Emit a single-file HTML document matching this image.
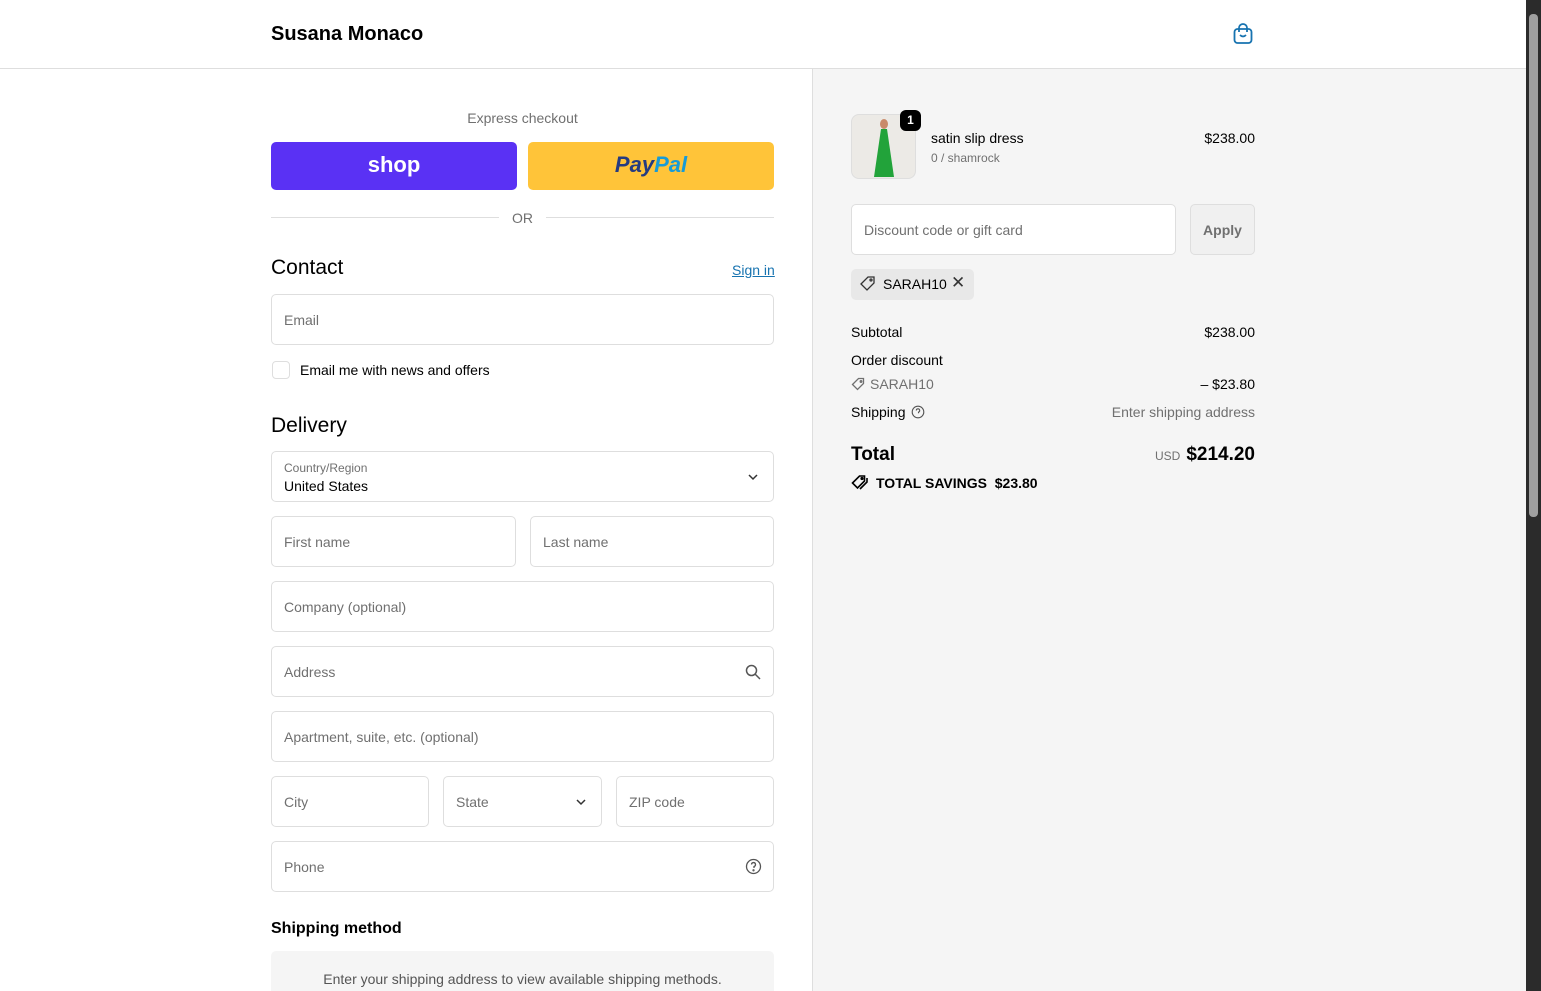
<!DOCTYPE html>
<html style="width:1541px;height:991px;overflow:hidden"><head><meta charset="utf-8"><style>
*{box-sizing:border-box;margin:0;padding:0}
body{width:1541px;height:991px;overflow:hidden;font-family:"Liberation Sans",sans-serif;color:#000;background:#fff;position:relative;font-size:14px}
.a{position:absolute}
.inp{position:absolute;border:1px solid #dedede;border-radius:5px;background:#fff;height:51px}
.ph{position:absolute;left:12px;top:17px;color:#707070;font-size:14px}
.r{position:absolute;font-size:14px}
</style></head><body>
<div class="a" style="left:0;top:0;width:1526px;height:69px;border-bottom:1px solid #dedede;background:#fff"></div>
<div class="a" style="left:271px;top:23px;font-size:20px;font-weight:bold">Susana Monaco</div>
<svg class="a" style="left:1232px;top:23px" width="22" height="22" viewBox="0 0 22 22" fill="none" stroke="#1773b0" stroke-width="1.8"><rect x="2.5" y="6" width="17" height="14" rx="3"/><path d="M7 9V5a4 4 0 0 1 8 0v4"/><path d="M8 12q3 3 6 0"/></svg>
<div class="a" style="left:812px;top:69px;width:714px;height:922px;background:#f5f5f5;border-left:1px solid #dedede"></div>
<div class="a" style="left:1526px;top:0;width:15px;height:991px;background:#2b2b2b"></div>
<div class="a" style="left:1529px;top:14px;width:9px;height:503px;background:#9f9f9f;border-radius:4px"></div>

<div class="a" style="left:271px;top:110px;width:503px;text-align:center;color:#707070;font-size:14px">Express checkout</div>
<div class="a" style="left:271px;top:142px;width:246px;height:48px;background:#5a31f4;border-radius:5px;color:#fff;font-weight:bold;font-size:22px;text-align:center;line-height:46px">shop</div>
<div class="a" style="left:528px;top:142px;width:246px;height:48px;background:#ffc439;border-radius:5px;text-align:center;line-height:46px;font-weight:bold;font-style:italic;font-size:22px"><span style="color:#253b80">Pay</span><span style="color:#179bd7">Pal</span></div>
<div class="a" style="left:271px;top:217px;width:228px;height:1px;background:#dedede"></div>
<div class="a" style="left:546px;top:217px;width:228px;height:1px;background:#dedede"></div>
<div class="a" style="left:500px;top:210px;width:45px;text-align:center;color:#707070">OR</div>

<div class="a" style="left:271px;top:256px;font-size:21px;font-weight:500">Contact</div>
<div class="a" style="left:732px;top:262px;color:#1773b0;text-decoration:underline">Sign in</div>
<div class="inp" style="left:271px;top:294px;width:503px"><span class="ph">Email</span></div>
<div class="a" style="left:272px;top:361px;width:18px;height:18px;border:1px solid #dedede;border-radius:4px"></div>
<div class="a" style="left:300px;top:362px">Email me with news and offers</div>

<div class="a" style="left:271px;top:414px;font-size:21px;font-weight:500">Delivery</div>
<div class="inp" style="left:271px;top:451px;width:503px"><span class="a" style="left:12px;top:9px;font-size:12px;color:#707070">Country/Region</span><span class="a" style="left:12px;top:26px">United States</span><svg class="a" style="left:475px;top:20px" width="12" height="10"><path d="M2 3l4 4 4-4" stroke="#333" stroke-width="1.5" fill="none"/></svg></div>
<div class="inp" style="left:271px;top:516px;width:245px"><span class="ph">First name</span></div>
<div class="inp" style="left:530px;top:516px;width:244px"><span class="ph">Last name</span></div>
<div class="inp" style="left:271px;top:581px;width:503px"><span class="ph">Company (optional)</span></div>
<div class="inp" style="left:271px;top:646px;width:503px"><span class="ph">Address</span><svg class="a" style="left:473px;top:17px" width="16" height="16" fill="none" stroke="#555" stroke-width="1.5"><circle cx="6.5" cy="6.5" r="5"/><path d="M10 10l5 5"/></svg></div>
<div class="inp" style="left:271px;top:711px;width:503px"><span class="ph">Apartment, suite, etc. (optional)</span></div>
<div class="inp" style="left:271px;top:776px;width:158px"><span class="ph">City</span></div>
<div class="inp" style="left:443px;top:776px;width:159px"><span class="ph">State</span><svg class="a" style="left:131px;top:20px" width="12" height="10"><path d="M2 3l4 4 4-4" stroke="#333" stroke-width="1.5" fill="none"/></svg></div>
<div class="inp" style="left:616px;top:776px;width:158px"><span class="ph">ZIP code</span></div>
<div class="inp" style="left:271px;top:841px;width:503px"><span class="ph">Phone</span><svg class="a" style="left:473px;top:16px" width="17" height="17" fill="none" stroke="#555" stroke-width="1.3"><circle cx="8.5" cy="8.5" r="7"/><path d="M6.5 6.5a2 2 0 1 1 2.5 2v1.5"/><circle cx="8.5" cy="12.3" r=".5"/></svg></div>
<div class="a" style="left:271px;top:920px;font-size:16px;font-weight:bold">Shipping method</div>
<div class="a" style="left:271px;top:951px;width:503px;height:40px;background:#f5f5f5;border-radius:5px 5px 0 0;text-align:center;padding-top:20px;color:#555">Enter your shipping address to view available shipping methods.</div>

<div class="a" style="left:851px;top:114px;width:65px;height:65px;border:1px solid #dedede;border-radius:8px;background:#eceae6;overflow:hidden"><div class="a" style="left:22px;top:14px;width:20px;height:48px;background:#22a33a;clip-path:polygon(35% 0,65% 0,100% 100%,0 100%)"></div><div class="a" style="left:28px;top:4px;width:8px;height:10px;background:#c98a6a;border-radius:50%"></div></div>
<div class="a" style="left:900px;top:110px;width:21px;height:21px;background:#000;border-radius:6px;color:#fff;font-size:12px;font-weight:bold;text-align:center;line-height:21px">1</div>
<div class="a" style="left:931px;top:130px">satin slip dress</div>
<div class="a" style="left:931px;top:151px;font-size:12px;color:#707070">0 / shamrock</div>
<div class="r" style="right:286px;top:130px">$238.00</div>
<div class="inp" style="left:851px;top:204px;width:325px;height:51px"><span class="ph">Discount code or gift card</span></div>
<div class="a" style="left:1190px;top:204px;width:65px;height:51px;border:1px solid #dedede;border-radius:5px;background:#f0f0f0;color:#707070;font-weight:bold;text-align:center;line-height:50px">Apply</div>
<div class="a" style="left:851px;top:269px;width:123px;height:31px;background:#e8e8e8;border-radius:5px"></div>
<svg class="a" style="left:859px;top:275px" width="18" height="18" fill="none" stroke="#333" stroke-width="1.3"><path d="M2 9l7-7h6v6l-7 7z"/><circle cx="12" cy="5" r="1"/></svg>
<div class="a" style="left:883px;top:276px">SARAH10</div>
<div class="a" style="left:951px;top:273px;font-size:17px;color:#333">✕</div>
<div class="a" style="left:851px;top:324px">Subtotal</div>
<div class="r" style="right:286px;top:324px">$238.00</div>
<div class="a" style="left:851px;top:352px">Order discount</div>
<svg class="a" style="left:851px;top:377px" width="15" height="15" fill="none" stroke="#707070" stroke-width="1.3"><path d="M1.5 7.5l6-6h5v5l-6 6z"/><circle cx="10" cy="4.5" r=".8"/></svg>
<div class="a" style="left:870px;top:376px;color:#707070">SARAH10</div>
<div class="r" style="right:286px;top:376px">– $23.80</div>
<div class="a" style="left:851px;top:404px">Shipping</div>
<svg class="a" style="left:911px;top:405px" width="14" height="14" fill="none" stroke="#555" stroke-width="1.1"><circle cx="7" cy="7" r="5.8"/><path d="M5.3 5.5a1.7 1.7 0 1 1 2.2 1.6v1.2"/></svg>
<div class="r" style="right:286px;top:404px;color:#707070">Enter shipping address</div>
<div class="a" style="left:851px;top:444px;font-size:19px;font-weight:bold">Total</div>
<div class="r" style="right:286px;top:444px;font-size:19px;font-weight:bold"><span style="font-size:12px;font-weight:normal;color:#707070;margin-right:6px">USD</span>$214.20</div>
<svg class="a" style="left:851px;top:474px" width="18" height="17" fill="none" stroke="#000" stroke-width="1.6"><path d="M1.5 9l7-7h5v5l-7 7z"/><path d="M16 4v4l-7 7"/><circle cx="11" cy="4.5" r=".8"/></svg>
<div class="a" style="left:876px;top:475px;font-weight:bold;font-size:14px">TOTAL SAVINGS&nbsp; $23.80</div>
</body></html>
